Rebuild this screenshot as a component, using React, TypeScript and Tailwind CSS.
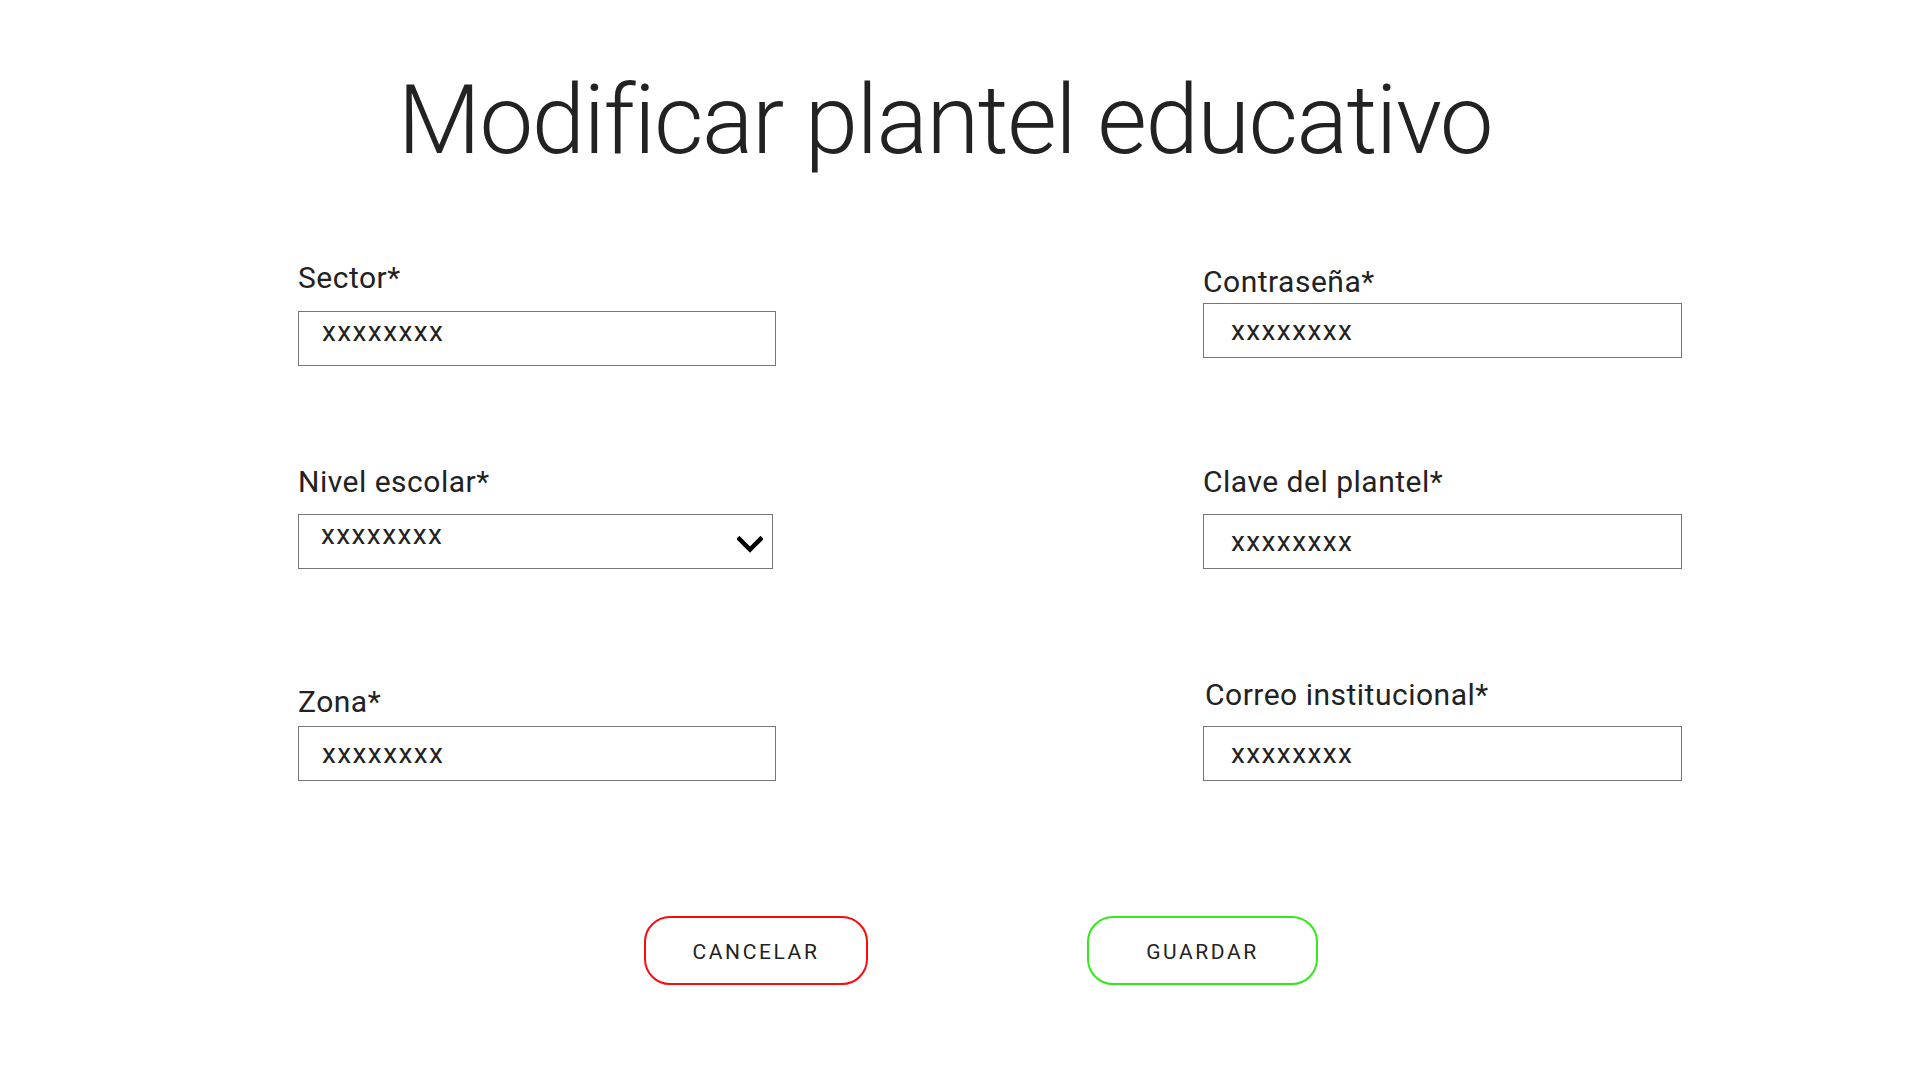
import React from "react";

const font = { fontFamily: "Roboto, 'Liberation Sans', sans-serif" };

const Field = ({
  label,
  labelClass,
  boxClass,
  chevron,
}: {
  label: string;
  labelClass: string;
  boxClass: string;
  chevron?: boolean;
}) => (
  <div className="flex flex-col">
    <label className={`text-[30px] leading-[36px] tracking-[0.5px] text-[#222] ${labelClass}`}>
      {label}
    </label>
    <div className={`flex h-[55px] border border-[#767676] bg-white ${boxClass}`}>
      <span className="text-[28px] leading-[28px] tracking-[1.4px] text-[#222]">xxxxxxxx</span>
      {chevron && (
        <svg
          className="ml-auto mr-[9px] self-center"
          width="26"
          height="17"
          viewBox="0 0 26 17"
          fill="none"
        >
          <polyline
            points="2.5,3 13,13.5 23.5,3"
            stroke="#000"
            strokeWidth="4.5"
            strokeLinecap="square"
          />
        </svg>
      )}
    </div>
  </div>
);

export default function App() {
  return (
    <div className="min-h-[1080px] w-full bg-white" style={font}>
      <h1 className="pt-[72px] pr-[30px] text-center text-[96px] leading-[96px] font-light tracking-[-1.5px] text-[#222]">
        Modificar plantel educativo
      </h1>

      {/* form columns */}
      <div className="ml-[298px] flex w-[1384px] justify-between">
        <div className="flex w-[478px] flex-col">
          <div className="mt-[92px]">
            <Field label="Sector*" labelClass="mb-[15px]" boxClass="pl-[23px] items-start pt-[6px]" />
          </div>
          <div className="mt-[98px] w-[475px]">
            <Field
              label="Nivel escolar*"
              labelClass="mb-[14px]"
              boxClass="pl-[22px] items-start pt-[6px]"
              chevron
            />
          </div>
          <div className="mt-[115px]">
            <Field label="Zona*" labelClass="mb-[6px]" boxClass="pl-[23px] items-center" />
          </div>
        </div>

        <div className="flex w-[479px] flex-col">
          <div className="mt-[96px]">
            <Field label="Contraseña*" labelClass="mb-[3px]" boxClass="pl-[27px] items-center" />
          </div>
          <div className="mt-[106px]">
            <Field label="Clave del plantel*" labelClass="mb-[14px]" boxClass="pl-[27px] items-center" />
          </div>
          <div className="mt-[108px]">
            <Field
              label="Correo institucional*"
              labelClass="mb-[13px] pl-[2px]"
              boxClass="pl-[27px] items-center"
            />
          </div>
        </div>
      </div>

      {/* actions */}
      <div className="ml-[644px] mt-[135px] flex gap-[219px]">
        <button className="flex h-[69px] w-[224px] items-center justify-center rounded-[26px] border-2 border-[#ff0a0a] bg-white pt-[4px] text-[21px] font-normal tracking-[2.6px] text-[#222]">
          CANCELAR
        </button>
        <button className="flex h-[69px] w-[231px] items-center justify-center rounded-[26px] border-2 border-[#35e81c] bg-white pt-[4px] text-[21px] font-normal tracking-[2.6px] text-[#222]">
          GUARDAR
        </button>
      </div>
    </div>
  );
}
